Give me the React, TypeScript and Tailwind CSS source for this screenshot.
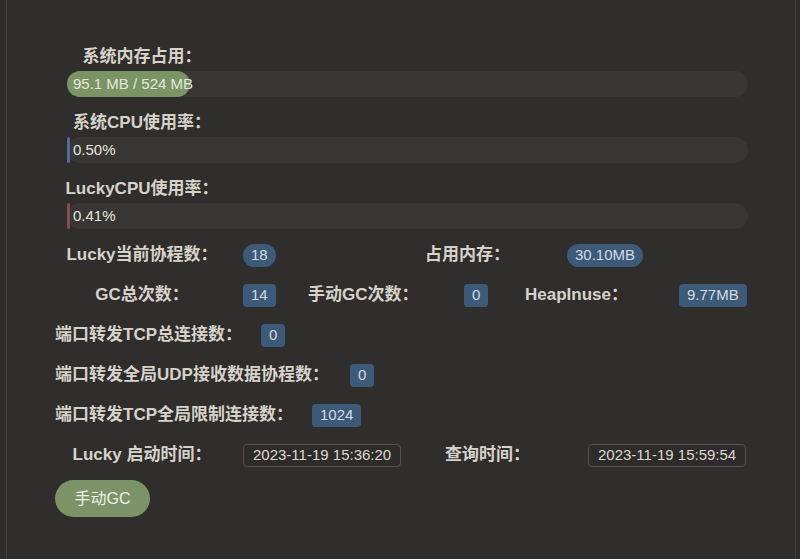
import React from "react";

const font = { fontFamily: '"Liberation Sans", "Noto Sans CJK SC", sans-serif' };

function Bar({ label, pct, color, text }: { label: string; pct: number; color: string; text: string }) {
  return (
    <div className="mb-[16px]">
      <div className="w-[174px] text-center text-[17px] leading-[20px] font-bold text-[#d6d2ca] mb-[4px]">{label}</div>
      <div className="ml-[12px] h-[26px] rounded-full bg-[#383634] relative">
        <div
          className={`h-full rounded-full ${color} flex items-center whitespace-nowrap overflow-visible`}
          style={{ width: `${pct}%` }}
        >
          <span className="pl-[6px] text-[15px] text-[#e4e6de]">{text}</span>
        </div>
      </div>
    </div>
  );
}

function Badge({ children, full }: { children: React.ReactNode; full?: boolean }) {
  return (
    <span
      className={`inline-flex items-center justify-center h-[23px] px-[8px] bg-[#3e5a79] text-[15px] text-[#d3dae2] whitespace-nowrap ${full ? "rounded-full" : "rounded-[4px]"}`}
    >
      {children}
    </span>
  );
}

function TimeBox({ children }: { children: React.ReactNode }) {
  return (
    <span className="inline-flex shrink-0 whitespace-nowrap items-center h-[23px] px-[9px] border border-[#55524e] rounded-[4px] bg-[#2e2c2a] text-[15px] text-[#dcd8d0]">
      {children}
    </span>
  );
}

const lbl = "text-[17px] leading-[20px] font-bold text-[#d6d2ca] whitespace-nowrap shrink-0";

export default function App() {
  return (
    <div className="w-[800px] h-[559px] bg-[#302e2c] overflow-hidden" style={font}>
      <div className="ml-[6px] w-[790px] h-full border-x border-[#43413e] pl-[48px] pr-[47px] pt-[47px]">
        <Bar label="系统内存占用：" pct={18.1} color="bg-[#7a9466]" text="95.1 MB / 524 MB" />
        <Bar label="系统CPU使用率：" pct={0.5} color="bg-[#4d6c99]" text="0.50%" />
        <Bar label="LuckyCPU使用率：" pct={0.41} color="bg-[#8c4a4c]" text="0.41%" />

        <div className="mt-[-10px] flex flex-col">
          <div className="h-[40px] flex items-center">
            <div className={`w-[174px] text-center ${lbl}`}>Lucky当前协程数：</div>
            <div className="ml-[14px] w-[182px] shrink-0"><Badge full>18</Badge></div>
            <div className={`w-[142px] ${lbl}`}>占用内存：</div>
            <Badge full>30.10MB</Badge>
          </div>
          <div className="h-[40px] flex items-center">
            <div className={`w-[174px] text-center ${lbl}`}>GC总次数：</div>
            <div className="ml-[14px] w-[65px] shrink-0"><Badge>14</Badge></div>
            <div className={`w-[156px] ${lbl}`}>手动GC次数：</div>
            <div className="w-[61px] shrink-0"><Badge>0</Badge></div>
            <div className={`w-[154px] ${lbl}`}>HeapInuse：</div>
            <Badge>9.77MB</Badge>
          </div>
          <div className="h-[40px] flex items-center gap-[19px]">
            <div className={lbl}>端口转发TCP总连接数：</div>
            <Badge>0</Badge>
          </div>
          <div className="h-[40px] flex items-center gap-[21px]">
            <div className={lbl}>端口转发全局UDP接收数据协程数：</div>
            <Badge>0</Badge>
          </div>
          <div className="h-[40px] flex items-center gap-[19px]">
            <div className={lbl}>端口转发TCP全局限制连接数：</div>
            <Badge>1024</Badge>
          </div>
          <div className="h-[40px] flex items-center">
            <div className={`w-[174px] text-center ${lbl}`}>Lucky 启动时间：</div>
            <div className="ml-[14px] w-[202px] shrink-0"><TimeBox>2023-11-19 15:36:20</TimeBox></div>
            <div className={`w-[143px] ${lbl}`}>查询时间：</div>
            <TimeBox>2023-11-19 15:59:54</TimeBox>
          </div>
        </div>

        <button className="mt-[5px] w-[95px] h-[37px] rounded-full bg-[#7b9367] text-[16px] text-[#eef0e8] flex items-center justify-center">
          手动GC
        </button>
      </div>
    </div>
  );
}
